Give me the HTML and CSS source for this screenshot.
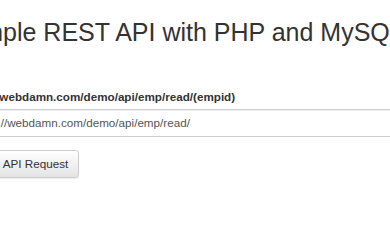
FILE: index.html
```html
<!DOCTYPE html>
<html lang="en">
<head>
<meta charset="utf-8">
<title>Simple REST API with PHP and MySQL</title>
<link rel="stylesheet" href="styles.css">
</head>
<body>
<div class="container">
  <h2 class="title">Simple REST API with PHP and MySQL</h2>
  <form class="api-form" onsubmit="return false;">
    <div class="form-group">
      <label class="field-label" for="url">http://webdamn.com/demo/api/emp/read/(empid)</label>
      <input class="form-control" id="url" type="text" value="http://webdamn.com/demo/api/emp/read/">
    </div>
    <button class="btn" type="submit">Send API Request</button>
  </form>
</div>
</body>
</html>
```

FILE: styles.css
```css
html, body {
  margin: 0;
  padding: 0;
  background: #fff;
}
body {
  font-family: "Liberation Sans", Arial, sans-serif;
  font-size: 11.67px;
  line-height: 16.7px;
  color: #333;
  overflow: hidden;
  width: 390px;
  height: 220px;
}
.container {
  margin-left: -33px;
  width: 800px;
}
.title {
  font-size: 25px;
  font-weight: 400;
  line-height: 27.5px;
  margin: 18.5px 0 0 -7px;
  color: #333;
  white-space: nowrap;
}
.api-form {
  margin: 0;
}
.form-group {
  margin-top: 42.5px;
  margin-bottom: 12.5px;
}
.field-label {
  display: block;
  font-weight: 700;
  margin-bottom: 3.3px;
  white-space: nowrap;
}
.form-control {
  display: block;
  box-sizing: border-box;
  width: 700px;
  height: 28.5px;
  padding: 5px 10px;
  margin: 0;
  font-family: "Liberation Sans", Arial, sans-serif;
  font-size: 11.67px;
  color: #555;
  background: #fff;
  border: 1px solid #ccc;
  border-radius: 3.3px;
  box-shadow: inset 0 1px 1px rgba(0, 0, 0, 0.075);
  outline: none;
}
.btn {
  display: inline-block;
  box-sizing: border-box;
  height: 28.5px;
  padding: 5px 10px;
  margin: 0 0 0 -5px;
  font-family: "Liberation Sans", Arial, sans-serif;
  font-size: 11.67px;
  line-height: 16.7px;
  color: #333;
  background: linear-gradient(to bottom, #fff 0%, #e4e4e4 100%);
  border: 1px solid #ccc;
  border-radius: 3.3px;
  box-shadow: inset 0 1px 0 rgba(255, 255, 255, 0.15), 0 1px 1px rgba(0, 0, 0, 0.075);
  cursor: pointer;
}
```
